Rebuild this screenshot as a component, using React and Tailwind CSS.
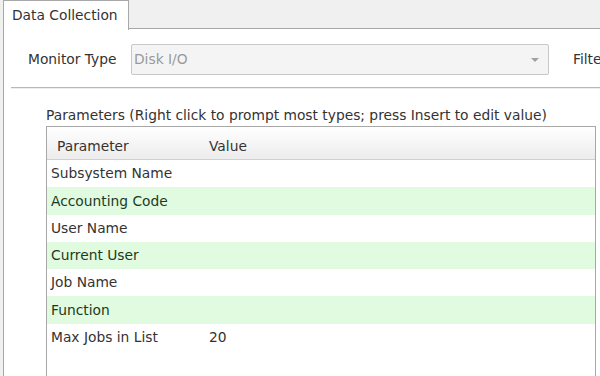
import React from "react";

const rows = [
  { name: "Subsystem Name", value: "", green: false },
  { name: "Accounting Code", value: "", green: true },
  { name: "User Name", value: "", green: false },
  { name: "Current User", value: "", green: true },
  { name: "Job Name", value: "", green: false },
  { name: "Function", value: "", green: true },
  { name: "Max Jobs in List", value: "20", green: false },
];

function App() {
  return (
    <div
      className="w-[600px] h-[376px] overflow-hidden bg-[#f0f0f0] flex flex-col text-[13.8px] text-[#333]"
      style={{ fontFamily: '"DejaVu Sans", Verdana, sans-serif' }}
    >
      {/* tab strip */}
      <div className="h-[29px] flex shrink-0">
        <div className="w-[3px]" />
        <div className="w-[126px] bg-white border border-b-0 border-[#a8a8a8] px-[8px] pt-[4px] relative z-10 -mb-px whitespace-nowrap">
          Data Collection
        </div>
        <div className="flex-1 border-b border-[#a8a8a8]" />
      </div>

      {/* panel */}
      <div className="flex-1 ml-[3px] bg-white border-l border-[#a8a8a8] flex flex-col">
        <div className="h-[58px] flex items-center pl-[24px] pt-[3px]">
          <span className="w-[103px] shrink-0 whitespace-nowrap">Monitor Type</span>
          <div className="w-[418px] shrink-0 h-[31px] border border-[#c8c8c8] rounded-[2px] bg-[#f4f4f4] flex items-center justify-between px-[2px] text-[#9a9a9a]">
            <span>Disk I/O</span>
            <svg width="10" height="6" viewBox="0 0 10 6" className="mr-[6px]">
              <path d="M1 1 L5 5 L9 1 Z" fill="#a0a0a0" />
            </svg>
          </div>
          <span className="ml-[24px] whitespace-nowrap">Filter</span>
        </div>
        <div className="ml-[7px] h-[2px] border-t border-[#b8b8b8] border-b border-b-[#eeeeee]" />

        <div className="pl-[42px] pr-[4px] flex-1 flex flex-col">
          <div className="pt-[16px] h-[37px] whitespace-nowrap">
            Parameters (Right click to prompt most types; press Insert to edit value)
          </div>
          <div className="flex-1 border border-[#a8a8a8] border-b-0 bg-white">
            <div className="h-[33px] flex items-center pt-[6px] bg-gradient-to-b from-white to-[#ececec] border-b border-[#d0d0d0]">
              <span className="w-[162px] pl-[10px]">Parameter</span>
              <span>Value</span>
            </div>
            {rows.map((r) => (
              <div
                key={r.name}
                className={`h-[27.3px] flex items-center ${
                  r.green ? "bg-[#e0fbe0] text-[#1e3a1e]" : "bg-white"
                }`}
              >
                <span className="w-[162px] pl-[4px] whitespace-nowrap">{r.name}</span>
                <span>{r.value}</span>
              </div>
            ))}
          </div>
        </div>
      </div>
    </div>
  );
}

export default App;
